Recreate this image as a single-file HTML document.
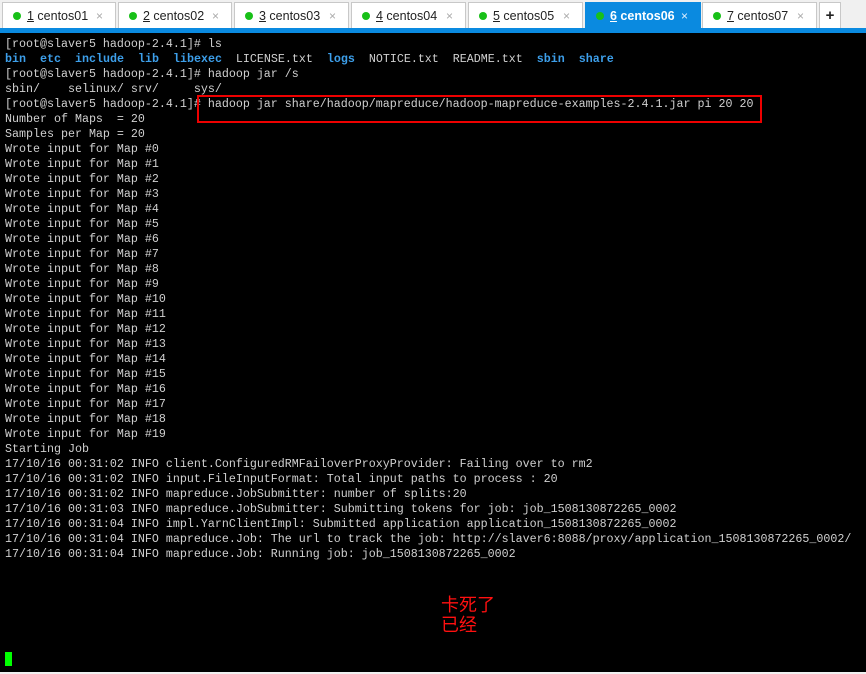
<!DOCTYPE html>
<html><head><meta charset="utf-8"><style>
body{margin:0;width:866px;height:674px;background:#f0f0f0;overflow:hidden;position:relative;font-family:"Liberation Sans","DejaVu Sans",sans-serif}
.tab{position:absolute;top:2px;height:26px;background:#fff;border:1px solid #c8c8c8;border-bottom:none;box-sizing:border-box;font-size:12.5px;color:#222;line-height:26px}
.tab .d{position:absolute;left:10px;top:9px;width:8px;height:8px;border-radius:50%;background:#18c018}
.tab .t{position:absolute;left:24px}
.tab .x{position:absolute;right:12px;color:#aaa;font-size:12px}
.tab.a{background:#0a8ae0;color:#fff;border-color:#0a8ae0;font-weight:bold}
.tab.a .x{color:#dfefff;font-weight:normal}
.bar{position:absolute;top:28px;left:0;width:866px;height:5px;background:#0a8ae0}
.term{position:absolute;top:33px;left:0;width:866px;height:639px;background:#000}
pre{position:absolute;left:5px;top:4px;margin:0;font-family:"Liberation Mono",monospace;font-size:11.67px;line-height:15px;color:#d0d0d0}
b{color:#3d9fea}
.box{position:absolute;left:197px;top:62px;width:565px;height:28px;border:2px solid #e00;box-sizing:border-box}
.cn{position:absolute;left:441px;top:561px;color:#ff1010;font-family:"Noto Sans CJK SC",sans-serif;font-size:18px;line-height:20px}
.cur{position:absolute;left:5px;top:619px;width:7px;height:14px;background:#00ff00}
</style></head><body>
<div class="tab" style="left:2px;width:114px"><span class="d"></span><span class="t"><u>1</u> centos01</span><span class="x">×</span></div>
<div class="tab" style="left:118px;width:114px"><span class="d"></span><span class="t"><u>2</u> centos02</span><span class="x">×</span></div>
<div class="tab" style="left:234px;width:115px"><span class="d"></span><span class="t"><u>3</u> centos03</span><span class="x">×</span></div>
<div class="tab" style="left:351px;width:115px"><span class="d"></span><span class="t"><u>4</u> centos04</span><span class="x">×</span></div>
<div class="tab" style="left:468px;width:115px"><span class="d"></span><span class="t"><u>5</u> centos05</span><span class="x">×</span></div>
<div class="tab a" style="left:585px;width:116px"><span class="d"></span><span class="t"><u>6</u> centos06</span><span class="x">×</span></div>
<div class="tab" style="left:702px;width:115px"><span class="d"></span><span class="t"><u>7</u> centos07</span><span class="x">×</span></div>
<div class="tab" style="left:819px;width:22px;text-align:center;font-weight:bold;font-size:15px">+</div>
<div class="bar"></div>
<div class="term">
<pre>[root@slaver5 hadoop-2.4.1]# ls
<b>bin</b>  <b>etc</b>  <b>include</b>  <b>lib</b>  <b>libexec</b>  LICENSE.txt  <b>logs</b>  NOTICE.txt  README.txt  <b>sbin</b>  <b>share</b>
[root@slaver5 hadoop-2.4.1]# hadoop jar /s
sbin/    selinux/ srv/     sys/
[root@slaver5 hadoop-2.4.1]# hadoop jar share/hadoop/mapreduce/hadoop-mapreduce-examples-2.4.1.jar pi 20 20
Number of Maps  = 20
Samples per Map = 20
Wrote input for Map #0
Wrote input for Map #1
Wrote input for Map #2
Wrote input for Map #3
Wrote input for Map #4
Wrote input for Map #5
Wrote input for Map #6
Wrote input for Map #7
Wrote input for Map #8
Wrote input for Map #9
Wrote input for Map #10
Wrote input for Map #11
Wrote input for Map #12
Wrote input for Map #13
Wrote input for Map #14
Wrote input for Map #15
Wrote input for Map #16
Wrote input for Map #17
Wrote input for Map #18
Wrote input for Map #19
Starting Job
17/10/16 00:31:02 INFO client.ConfiguredRMFailoverProxyProvider: Failing over to rm2
17/10/16 00:31:02 INFO input.FileInputFormat: Total input paths to process : 20
17/10/16 00:31:02 INFO mapreduce.JobSubmitter: number of splits:20
17/10/16 00:31:03 INFO mapreduce.JobSubmitter: Submitting tokens for job: job_1508130872265_0002
17/10/16 00:31:04 INFO impl.YarnClientImpl: Submitted application application_1508130872265_0002
17/10/16 00:31:04 INFO mapreduce.Job: The url to track the job: http://slaver6:8088/proxy/application_1508130872265_0002/
17/10/16 00:31:04 INFO mapreduce.Job: Running job: job_1508130872265_0002</pre>
<div class="box"></div>
<div class="cn">卡死了<br>已经</div>
<div class="cur"></div>
</div>
</body></html>
